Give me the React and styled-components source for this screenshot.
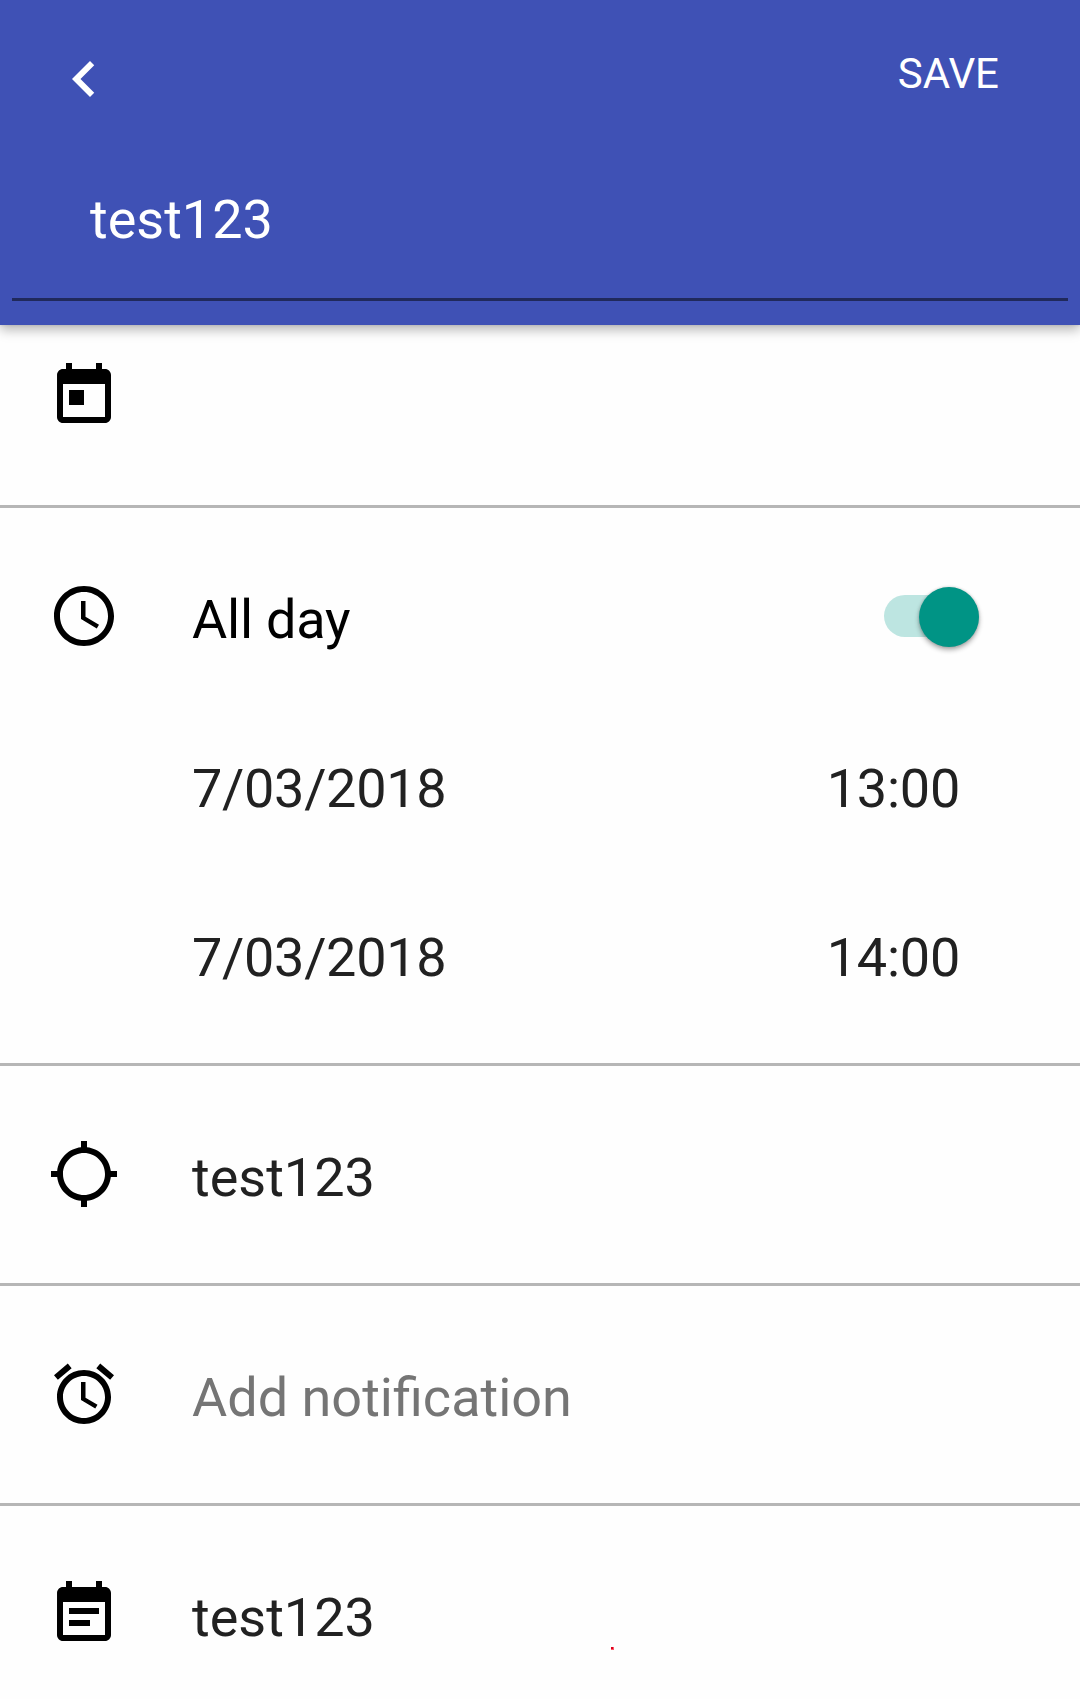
import React from "react";
import styled, { createGlobalStyle } from "styled-components";

const GlobalStyle = createGlobalStyle`
  * { box-sizing: border-box; }
  body {
    margin: 0;
    background: #fefefe;
    font-family: Roboto, "Liberation Sans", sans-serif;
    overflow: hidden;
  }
`;

const Screen = styled.main`
  display: flex;
  flex-direction: column;
  width: 1080px;
  height: 1699px;
  overflow: hidden;
  background: #fefefe;
`;

const Header = styled.header`
  display: flex;
  flex-direction: column;
  flex: none;
  height: 325px;
  padding: 37px 12px 24px;
  background: #3f51b5;
  color: #fff;
  box-shadow: 0 5px 11px rgba(0, 0, 0, 0.28), 0 0 3px rgba(0, 0, 0, 0.12);
  z-index: 1;
`;

const Toolbar = styled.div`
  display: flex;
  justify-content: space-between;
  align-items: flex-start;
  padding: 0 69px 0 36px;
`;

const IconButton = styled.button`
  display: flex;
  padding: 6px 0 0;
  border: 0;
  background: none;
  color: inherit;
`;

const SaveButton = styled.button`
  padding: 1px 0 0;
  border: 0;
  background: none;
  color: inherit;
  font: 400 42px/72px Roboto, "Liberation Sans", sans-serif;
`;

const TitleField = styled.div`
  flex: 1;
  margin-top: 31px;
  padding: 38px 78px 0;
  border-bottom: 3px solid #20295b;
  font-size: 54px;
  line-height: 72px;
`;

const Section = styled.section`
  display: flex;
  flex: none;
  gap: 72px;
  height: ${(p) => p.$height}px;
  padding: ${(p) => p.$top ?? 72}px 100px 0 48px;
  border-bottom: ${(p) => (p.$last ? "0" : "3px solid #b6b6b6")};
  position: relative;
`;

const Glyph = styled.svg`
  flex: none;
  width: 72px;
  height: 72px;
  fill: currentColor;
`;

const Lines = styled.div`
  display: flex;
  flex: 1;
  flex-direction: column;
  gap: 97px;
  padding-top: 4px;
`;

const Line = styled.div`
  display: flex;
  justify-content: space-between;
  height: 72px;
  padding-right: ${(p) => (p.$inset ? 20 : 1)}px;
`;

const Text = styled.span`
  color: ${(p) => p.$color ?? "#212121"};
  font-size: 54px;
  line-height: 72px;
  letter-spacing: ${(p) => p.$tracking ?? "normal"};
  white-space: nowrap;
`;

const Track = styled.div`
  display: flex;
  justify-content: flex-end;
  width: 95px;
  height: 42px;
  margin-top: 11px;
  border-radius: 21px;
  background: #bde5e1;
`;

const Thumb = styled.div`
  width: 60px;
  height: 60px;
  margin-top: -8px;
  border-radius: 50%;
  background: #009485;
  box-shadow: 0 3px 5px rgba(0, 0, 0, 0.32), 0 0 3px rgba(0, 0, 0, 0.16);
`;

const Marker = styled.i`
  position: absolute;
  left: 611px;
  top: 141px;
  width: 3px;
  height: 3px;
  background: #ff5566;
  &::before {
    content: "";
    display: block;
    width: 2px;
    height: 2px;
    background: #d8001c;
  }
`;

const paths = {
  back: "M15.41 7.41L14 6l-6 6 6 6 1.41-1.41L10.83 12z",
  today:
    "M19 3h-1V1h-2v2H8V1H6v2H5c-1.11 0-1.99.9-1.99 2L3 19c0 1.1.89 2 2 2h14c1.1 0 2-.9 2-2V5c0-1.1-.9-2-2-2zm0 16H5V8h14v11zM7 10h5v5H7z",
  clock:
    "M11.99 2C6.47 2 2 6.48 2 12s4.47 10 9.99 10C17.52 22 22 17.52 22 12S17.52 2 11.99 2zM12 20c-4.42 0-8-3.58-8-8s3.58-8 8-8 8 3.58 8 8-3.58 8-8 8zm.5-13H11v6l5.25 3.15.75-1.23-4.5-2.67z",
  location:
    "M20.94 11c-.46-4.17-3.77-7.48-7.94-7.94V1h-2v2.06C6.83 3.52 3.52 6.83 3.06 11H1v2h2.06c.46 4.17 3.77 7.48 7.94 7.94V23h2v-2.06c4.17-.46 7.48-3.77 7.94-7.94H23v-2h-2.06zM12 19c-3.87 0-7-3.13-7-7s3.13-7 7-7 7 3.13 7 7-3.13 7-7 7z",
  alarm:
    "M22 5.72l-4.6-3.86-1.29 1.53 4.6 3.86L22 5.72zM7.88 3.39L6.6 1.86 2 5.71l1.29 1.53 4.59-3.85zM12.5 8H11v6l4.75 2.85.75-1.23-4-2.37V8zM12 4c-4.97 0-9 4.03-9 9s4.02 9 9 9c4.97 0 9-4.03 9-9s-4.03-9-9-9zm0 16c-3.87 0-7-3.13-7-7s3.13-7 7-7 7 3.13 7 7-3.13 7-7 7z",
  note:
    "M17 10H7v2h10v-2zm2-7h-1V1h-2v2H8V1H6v2H5c-1.11 0-1.99.9-1.99 2L3 19c0 1.1.89 2 2 2h14c1.1 0 2-.9 2-2V5c0-1.1-.9-2-2-2zm0 16H5V8h14v11zm-5-5H7v2h7v-2z",
};

const Icon = ({ name }) => (
  <Glyph viewBox="0 0 24 24" aria-hidden="true">
    <path d={paths[name]} />
  </Glyph>
);

const DateLine = ({ date, time }) => (
  <Line $inset>
    <Text $tracking="-0.3px">{date}</Text>
    <Text $tracking="-0.25px">{time}</Text>
  </Line>
);

export default function App() {
  return (
    <>
      <GlobalStyle />
      <Screen>
        <Header>
          <Toolbar>
            <IconButton aria-label="Back">
              <Icon name="back" />
            </IconButton>
            <SaveButton>SAVE</SaveButton>
          </Toolbar>
          <TitleField>test123</TitleField>
        </Header>
        <Section $height={183} $top={35}>
          <Icon name="today" />
        </Section>
        <Section $height={558}>
          <Icon name="clock" />
          <Lines>
            <Line>
              <Text $color="#000" $tracking="-0.2px">All day</Text>
              <Track role="switch" aria-checked="true">
                <Thumb />
              </Track>
            </Line>
            <DateLine date="7/03/2018" time="13:00" />
            <DateLine date="7/03/2018" time="14:00" />
          </Lines>
        </Section>
        <Section $height={220}>
          <Icon name="location" />
          <Lines>
            <Text>test123</Text>
          </Lines>
        </Section>
        <Section $height={220}>
          <Icon name="alarm" />
          <Lines>
            {/* normal tracking keeps the "fi" ligature */}
            <Text $color="#757575">Add notification</Text>
          </Lines>
        </Section>
        <Section $height={193} $last>
          <Icon name="note" />
          <Lines>
            <Text>test123</Text>
          </Lines>
          <Marker />
        </Section>
      </Screen>
    </>
  );
}
